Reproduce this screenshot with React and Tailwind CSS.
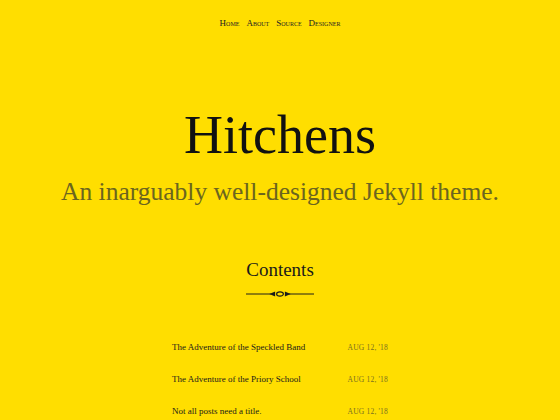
export default function App() {
  const posts = [
    "The Adventure of the Speckled Band",
    "The Adventure of the Priory School",
    "Not all posts need a title.",
  ];
  return (
    <div className="w-[560px] h-[420px] overflow-hidden bg-[#ffde00] text-[#1a1a1a]" style={{ fontFamily: '"Liberation Serif", "DejaVu Serif", serif' }}>
      <nav className="flex justify-center gap-[7px] pt-[17px] text-[9px] leading-[12px] [font-variant:small-caps] text-[#222]">
        <span>Home</span>
        <span>About</span>
        <span>Source</span>
        <span>Designer</span>
      </nav>
      <header className="flex flex-col items-center mt-[76px]">
        <h1 className="text-[54px] leading-[60px] text-[#111]">Hitchens</h1>
        <p className="mt-[12px] text-[25.5px] leading-[30px] text-[#6b651f]">An inarguably well-designed Jekyll theme.</p>
      </header>
      <section className="flex flex-col items-center mt-[51px]">
        <h2 className="text-[19px] leading-[24px] text-[#1a1a1a]">Contents</h2>
        <svg width="68" height="10" viewBox="0 0 70 10" className="mt-[7px]">
          <line x1="0" y1="5" x2="26" y2="5" stroke="#1a1a1a" strokeWidth="1" />
          <line x1="44" y1="5" x2="70" y2="5" stroke="#1a1a1a" strokeWidth="1" />
          <polygon points="24,5 30,2.5 30,7.5" fill="#1a1a1a" />
          <polygon points="46,5 40,2.5 40,7.5" fill="#1a1a1a" />
          <ellipse cx="35" cy="5" rx="3.5" ry="2.2" fill="none" stroke="#1a1a1a" strokeWidth="1.2" />
        </svg>
      </section>
      <ul className="mt-[41px] flex flex-col gap-[18px] ml-[172px] w-[216px]">
        {posts.map((p) => (
          <li key={p} className="flex items-baseline justify-between h-[14px]">
            <span className="text-[9px] leading-[14px] text-[#1a1a1a]">{p}</span>
            <span className="text-[7.5px] leading-[14px] text-[#7a7020] tracking-[0.2px]">AUG 12, '18</span>
          </li>
        ))}
      </ul>
    </div>
  );
}
